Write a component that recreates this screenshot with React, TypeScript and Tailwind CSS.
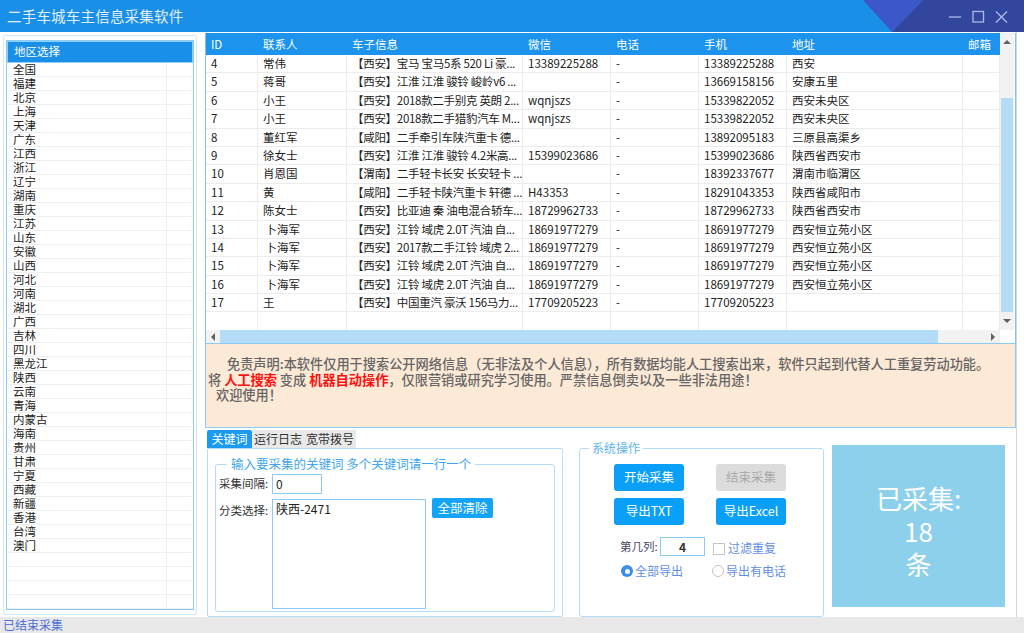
import React from 'react';

const regions = [
  '全国', '福建', '北京', '上海', '天津', '广东', '江西', '浙江', '辽宁', '湖南', '重庆', '江苏',
  '山东', '安徽', '山西', '河北', '河南', '湖北', '广西', '吉林', '四川', '黑龙江', '陕西', '云南',
  '青海', '内蒙古', '海南', '贵州', '甘肃', '宁夏', '西藏', '新疆', '香港', '台湾', '澳门', '', '', '', '',
];

const columns = [
  { title: 'ID', w: 'w-[52px]' },
  { title: '联系人', w: 'w-[89px]' },
  { title: '车子信息', w: 'w-[176px]' },
  { title: '微信', w: 'w-[88px]' },
  { title: '电话', w: 'w-[88px]' },
  { title: '手机', w: 'w-[88px]' },
  { title: '地址', w: 'w-[176px]' },
  { title: '邮箱', w: 'w-[37px]' },
];

const rows = [
  ['4', '常伟', '【西安】宝马 宝马5系 520 Li 豪...', '13389225288', '-', '13389225288', '西安', ''],
  ['5', '蒋哥', '【西安】江淮 江淮 骏铃 峻岭v6 ...', '', '-', '13669158156', '安康五里', ''],
  ['6', '小王', '【西安】2018款二手别克 英朗 2...', 'wqnjszs', '-', '15339822052', '西安未央区', ''],
  ['7', '小王', '【西安】2018款二手猎豹汽车 M...', 'wqnjszs', '-', '15339822052', '西安未央区', ''],
  ['8', '董红军', '【咸阳】二手牵引车陕汽重卡 德...', '', '-', '13892095183', '三原县高渠乡', ''],
  ['9', '徐女士', '【西安】江淮 江淮 骏铃 4.2米高...', '15399023686', '-', '15399023686', '陕西省西安市', ''],
  ['10', '肖恩国', '【渭南】二手轻卡长安 长安轻卡 ...', '', '-', '18392337677', '渭南市临渭区', ''],
  ['11', '黄', '【咸阳】二手轻卡陕汽重卡 轩德 ...', 'H43353', '-', '18291043353', '陕西省咸阳市', ''],
  ['12', '陈女士', '【西安】比亚迪 秦 油电混合轿车...', '18729962733', '-', '18729962733', '陕西省西安市', ''],
  ['13', ' 卜海军', '【西安】江铃 域虎 2.0T 汽油 自...', '18691977279', '-', '18691977279', '西安恒立苑小区', ''],
  ['14', ' 卜海军', '【西安】2017款二手江铃 域虎 2...', '18691977279', '-', '18691977279', '西安恒立苑小区', ''],
  ['15', ' 卜海军', '【西安】江铃 域虎 2.0T 汽油 自...', '18691977279', '-', '18691977279', '西安恒立苑小区', ''],
  ['16', ' 卜海军', '【西安】江铃 域虎 2.0T 汽油 自...', '18691977279', '-', '18691977279', '西安恒立苑小区', ''],
  ['17', '王', '【西安】中国重汽 豪沃 156马力...', '17709205223', '-', '17709205223', '', ''],
];

const Arrow = ({ dir }: { dir: 'up' | 'down' | 'left' | 'right' }) => {
  const pts = {
    up: '0,5 4,1 8,5',
    down: '0,1 4,5 8,1',
    left: '5,0 1,4 5,8',
    right: '1,0 5,4 1,8',
  }[dir];
  const size = dir === 'up' || dir === 'down' ? { w: 8, h: 6 } : { w: 6, h: 8 };
  return (
    <svg width={size.w} height={size.h} viewBox={`0 0 ${size.w} ${size.h}`}>
      <polygon points={pts} fill="#606060" />
    </svg>
  );
};

const TitleBar = () => (
  <div className="relative h-[32px] shrink-0 bg-[#1a8fe8] flex items-center pl-[7px]">
    <svg className="absolute left-0 top-0" width="1024" height="32" viewBox="0 0 1024 32">
      <polygon points="863,0 923,0 892,32" fill="#3b57c9" />
      <polygon points="923,0 1024,0 1024,32 892,32" fill="#33469d" />
    </svg>
    <span className="relative text-[14.5px] text-[#e3effc] tracking-[0.2px]">二手车城车主信息采集软件</span>
    <div className="absolute right-[16px] top-[10px] flex items-center gap-[10px]">
      <svg width="13" height="13" viewBox="0 0 13 13">
        <line x1="0" y1="7" x2="12" y2="7" stroke="#aeb8e2" strokeWidth="1.3" />
      </svg>
      <svg width="13" height="13" viewBox="0 0 13 13">
        <rect x="1" y="1.5" width="10.5" height="10.5" fill="none" stroke="#aeb8e2" strokeWidth="1.3" />
      </svg>
      <svg width="13" height="13" viewBox="0 0 13 13">
        <path d="M1 1.5 L12 12.5 M12 1.5 L1 12.5" stroke="#aeb8e2" strokeWidth="1.3" />
      </svg>
    </div>
  </div>
);

const LeftPanel = () => (
  <div className="w-[200px] shrink-0 pt-[3px] pl-[3px] pr-[3px] pb-[2px] flex">
    <div className="flex-1 border border-[#d3e9f9] rounded-[2px] pt-[4px] px-[2px] pb-[4px] flex">
      <div className="flex-1 border border-[#8ccbf5] flex flex-col overflow-hidden">
        <div className="h-[22px] shrink-0 bg-[#1a8fe8] border border-[#8fd0f8] flex items-center pl-[6px] text-[11.5px] text-white">
          地区选择
        </div>
        {regions.map((r, i) => (
          <div key={i} className="h-[14px] shrink-0 flex border-b border-[#efefef]">
            <div className="w-[160px] border-r border-[#efefef] pl-[6px] text-[11.5px] leading-[13px] text-[#222]">{r}</div>
            <div className="flex-1" />
          </div>
        ))}
      </div>
    </div>
  </div>
);

const DataTable = () => (
  <div className="h-[310px] shrink-0 border-x border-[#7cc2f2] flex flex-col">
    <div className="flex flex-1 min-h-0">
      <div className="w-[794px] flex flex-col">
        <div className="h-[22px] shrink-0 flex bg-[#1c93ec]">
          {columns.map((c) => (
            <div key={c.title} className={`${c.w} shrink-0 pl-[5px] text-[11.5px] leading-[22px] text-white whitespace-nowrap overflow-hidden`}>
              {c.title}
            </div>
          ))}
        </div>
        {rows.map((r) => (
          <div key={r[0]} className="h-[18.4px] shrink-0 flex border-b border-[#ececec]">
            {r.map((v, j) => (
              <div
                key={j}
                className={`${columns[j].w} shrink-0 pl-[5px] border-r border-[#ececec] text-[11.5px] leading-[17.4px] text-[#222] whitespace-pre overflow-hidden ${
                  j === 2 ? 'tracking-[-0.3px] pl-[4px]' : ''
                }`}
              >
                {v}
              </div>
            ))}
          </div>
        ))}
        <div className="flex-1 flex">
          {columns.map((c) => (
            <div key={c.title} className={`${c.w} shrink-0 border-r border-[#ececec]`} />
          ))}
        </div>
      </div>
      <div className="w-[14px] shrink-0 bg-[#f2f2f2] flex flex-col items-center">
        <div className="h-[17px] w-full flex items-center justify-center">
          <Arrow dir="up" />
        </div>
        <div className="h-[48px]" />
        <div className="h-[214px] w-[12px] bg-[#b5dcf7]" />
        <div className="flex-1 w-full flex items-center justify-center">
          <Arrow dir="down" />
        </div>
      </div>
    </div>
    <div className="h-[13px] shrink-0 flex">
      <div className="w-[14px] bg-[#f2f2f2] flex items-center justify-center">
        <Arrow dir="left" />
      </div>
      <div className="w-[718px] bg-[#b5dcf7]" />
      <div className="w-[48px] bg-[#f2f2f2]" />
      <div className="w-[14px] bg-[#f2f2f2] flex items-center justify-center">
        <Arrow dir="right" />
      </div>
      <div className="flex-1 bg-white" />
    </div>
  </div>
);

const Notice = () => (
  <div className="h-[85px] shrink-0 border border-[#8ccbf5] bg-[#fce9d6] pt-[12px] px-[1px] text-[13.2px] leading-[15.5px] font-medium text-[#666] whitespace-nowrap">
    <div className="pl-[20px]">
      免责声明:本软件仅用于搜索公开网络信息（无非法及个人信息），所有数据均能人工搜索出来，软件只起到代替人工重复劳动功能。
    </div>
    <div className="pl-[1px]">
      将 <span className="text-[#ff1010] font-bold">人工搜索</span> 变成 <span className="text-[#ff1010] font-bold">机器自动操作</span>，仅限营销或研究学习使用。严禁信息倒卖以及一些非法用途！
    </div>
    <div className="pl-[9px]">欢迎使用！</div>
  </div>
);

const BlueButton = ({ children, disabled }: { children: React.ReactNode; disabled?: boolean }) => (
  <div
    className={`w-[70px] h-[27px] rounded-[3px] flex items-center justify-center text-[12.5px] ${
      disabled ? 'bg-[#dcdcdc] text-[#a9a9a9]' : 'bg-[#0ba0f7] text-white'
    }`}
  >
    {children}
  </div>
);

const KeywordTab = () => (
  <div className="w-[356px] shrink-0 pt-[2px] flex flex-col">
    <div className="h-[18px] flex text-[12px] leading-[18px]">
      <div className="w-[45px] bg-[#1a9bf0] text-white text-center rounded-t-[2px]">关键词</div>
      <div className="w-[52px] bg-[#e9e9e9] text-[#333] text-center">运行日志</div>
      <div className="w-[52px] bg-[#e9e9e9] text-[#333] text-center">宽带拨号</div>
    </div>
    <div className="flex-1 border border-[#b3ddf9] rounded-[2px] px-[7px] pt-[7px] pb-[4px] flex">
      <fieldset className="flex-1 border border-[#b3ddf9] rounded-[3px] pl-[3px] flex flex-col">
        <legend className="ml-[8px] px-[4px] text-[12.5px] leading-[16px] text-[#3fa6ef]">
          输入要采集的关键词 多个关键词请一行一个
        </legend>
        <div className="flex items-center mt-[2px] h-[20px]">
          <div className="w-[53px] text-[11.5px] text-[#333]">采集间隔:</div>
          <div className="w-[50px] h-[20px] border border-[#8ccbf5] text-[12px] leading-[18px] pl-[3px] text-[#222]">0</div>
        </div>
        <div className="flex mt-[5px]">
          <div className="w-[53px] text-[11.5px] text-[#333] pt-[3px]">分类选择:</div>
          <div className="w-[154px] h-[110px] border border-[#8ccbf5] text-[12px] leading-[18px] pl-[3px] text-[#222]">陕西-2471</div>
          <div className="ml-[6px] -mt-[1px] w-[61px] h-[20px] rounded-[2px] bg-[#14a4f5] text-white text-[12.5px] leading-[20px] text-center">
            全部清除
          </div>
        </div>
      </fieldset>
    </div>
  </div>
);

const SystemOps = () => (
  <fieldset className="w-[245px] shrink-0 mt-[13px] border border-[#b3ddf9] rounded-[3px] flex flex-col">
    <legend className="ml-[9px] px-[3px] text-[12px] leading-[14px] text-[#5cb3f0]">系统操作</legend>
    <div className="grid grid-cols-[70px_70px] gap-x-[32px] gap-y-[7px] ml-[34px] mt-[9px]">
      <BlueButton>开始采集</BlueButton>
      <BlueButton disabled>结束采集</BlueButton>
      <BlueButton>导出TXT</BlueButton>
      <BlueButton>导出Excel</BlueButton>
    </div>
    <div className="flex items-center ml-[40px] mt-[12px] h-[19px]">
      <div className="w-[40px] text-[11.5px] text-[#4a4a6a]">第几列:</div>
      <div className="w-[45px] h-[19px] border border-[#8ccbf5] text-[12px] leading-[17px] text-center font-semibold text-[#333]">4</div>
      <div className="ml-[8px] mt-[4px] w-[12px] h-[12px] border border-[#c4c4c4] bg-white" />
      <div className="ml-[3px] mt-[3px] text-[12px] text-[#5f8fe2]">过滤重复</div>
    </div>
    <div className="flex items-center ml-[41px] mt-[7px] h-[16px]">
      <div className="w-[12px] h-[12px] rounded-full bg-[#3d8ee8] flex items-center justify-center">
        <div className="w-[5px] h-[5px] rounded-full bg-white" />
      </div>
      <div className="ml-[2px] w-[77px] text-[12px] text-[#5f8fe2]">全部导出</div>
      <div className="w-[12px] h-[12px] rounded-full border border-[#c4c4c4] bg-white" />
      <div className="ml-[2px] text-[12px] text-[#5f8fe2]">导出有电话</div>
    </div>
  </fieldset>
);

const CountBox = () => (
  <div className="w-[173px] h-[162px] shrink-0 mt-[17px] bg-[#8dd0ec] flex flex-col items-center justify-center pt-[8px] text-white text-[26px] leading-[33px]">
    <div>已采集:</div>
    <div>18</div>
    <div>条</div>
  </div>
);

export default function App() {
  return (
    <div className="w-[1024px] h-[633px] flex flex-col bg-white overflow-hidden font-['Microsoft_YaHei','Noto_Sans_CJK_SC',sans-serif]">
      <TitleBar />
      <div className="flex flex-1 min-h-0">
        <LeftPanel />
        <div className="w-[816px] shrink-0 pl-[5px] pt-[1px] flex flex-col">
          <DataTable />
          <Notice />
          <div className="flex-1 flex pl-[2px]">
            <KeywordTab />
            <div className="w-[16px]" />
            <SystemOps />
            <div className="w-[8px]" />
            <CountBox />
          </div>
        </div>
        <div className="w-[1px] bg-[#d4d8dc]" />
        <div className="flex-1" />
      </div>
      <div className="h-[16px] shrink-0 bg-[#e8e8e8] pl-[3px] text-[12px] leading-[16px] text-[#4a6fd6]">已结束采集</div>
    </div>
  );
}
